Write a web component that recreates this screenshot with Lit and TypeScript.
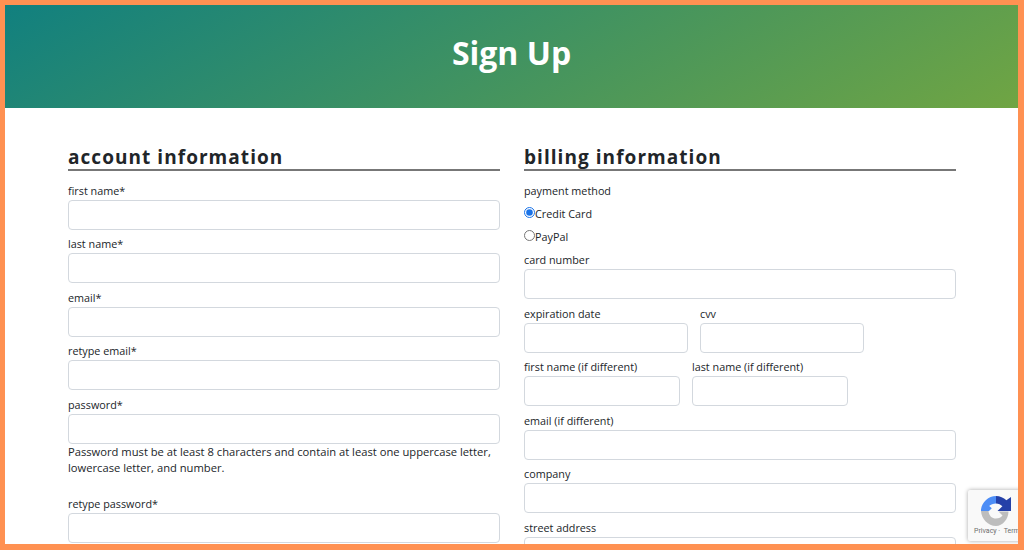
import { LitElement, html, css } from "lit";
import { customElement } from "lit/decorators.js";

const field = (label: string, cls = "") => html`
  <div class="field ${cls}">
    <label>${label}</label>
    <input type="text" />
  </div>
`;

@customElement("app-root")
export class AppRoot extends LitElement {
  static styles = css`
    :host {
      display: block;
      width: 1024px;
      height: 550px;
      box-sizing: border-box;
      border-style: solid;
      border-color: #ff9152;
      border-width: 5px 6px 6px 5px;
      overflow: hidden;
      position: relative;
      background: #fff;
      font-family: "Open Sans", sans-serif;
      color: #212529;
    }
    .hero {
      height: 103px;
      display: flex;
      align-items: center;
      justify-content: center;
      background: linear-gradient(150deg, #11807f 0%, #70a543 100%);
    }
    h1 {
      margin: 0;
      color: #fff;
      font-size: 32px;
      font-weight: 700;
      line-height: 1.2;
      padding-bottom: 6px;
    }
    .cols {
      display: grid;
      grid-template-columns: 432px 432px;
      gap: 24px;
      padding: 37px 0 0 63px;
    }
    h2 {
      margin: 0 0 10.9px;
      font-size: 19px;
      font-weight: 700;
      letter-spacing: 1.05px;
      line-height: 24px;
      border-bottom: 2px solid #777;
    }
    .field {
      display: flex;
      flex-direction: column;
      margin-bottom: 5.5px;
    }
    .field.pw {
      margin-bottom: 0;
    }
    label,
    .label {
      display: block;
      font-size: 10.8px;
      line-height: 18px;
    }
    input[type="text"] {
      display: block;
      box-sizing: border-box;
      width: 100%;
      height: 30px;
      border: 1px solid #d3d8de;
      border-radius: 4px;
      background: #fff;
      padding: 0 8px;
      margin: 0;
    }
    .hint {
      margin: 0 0 18px;
      font-size: 11.2px;
      line-height: 16.5px;
    }
    .row {
      display: flex;
      gap: 12px;
    }
    .w164 { width: 164px; }
    .w156 { width: 156px; }
    .radio {
      display: flex;
      align-items: center;
      font-size: 10.8px;
      line-height: 18px;
      height: 18px;
      margin: 5px 0 0;
    }
    .radio input {
      margin: 0 0 2px;
      width: 11px;
      height: 11px;
      accent-color: #1a73e8;
    }
    .group {
      margin-bottom: 5.5px;
    }
    .recaptcha {
      position: absolute;
      left: 963px;
      top: 485px;
      width: 90px;
      height: 51px;
      background: #f9f9f9;
      border-radius: 2px;
      box-shadow: 0 0 4px rgba(0, 0, 0, 0.35);
    }
    .recaptcha svg {
      position: absolute;
      left: 13px;
      top: 6px;
      width: 30px;
      height: 30px;
    }
    .links {
      position: absolute;
      left: 6px;
      top: 37px;
      font-family: "Roboto", sans-serif;
      font-size: 7px;
      line-height: 9px;
      color: #6f6f6f;
      white-space: nowrap;
    }
  `;

  render() {
    return html`
      <header class="hero"><h1>Sign Up</h1></header>
      <main class="cols">
        <section>
          <h2>account information</h2>
          ${field("first name*")}
          ${field("last name*")}
          ${field("email*")}
          ${field("retype email*")}
          <div class="field pw">
            <label>password*</label>
            <input type="text" />
          </div>
          <p class="hint">
            Password must be at least 8 characters and contain at least one uppercase letter, lowercase letter, and number.
          </p>
          ${field("retype password*")}
        </section>
        <section>
          <h2>billing information</h2>
          <div class="group">
            <span class="label">payment method</span>
            <div class="radio"><input type="radio" name="pay" checked />Credit Card</div>
            <div class="radio"><input type="radio" name="pay" />PayPal</div>
          </div>
          ${field("card number")}
          <div class="row">
            ${field("expiration date", "w164")}
            ${field("cvv", "w164")}
          </div>
          <div class="row">
            ${field("first name (if different)", "w156")}
            ${field("last name (if different)", "w156")}
          </div>
          ${field("email (if different)")}
          ${field("company")}
          ${field("street address")}
        </section>
      </main>
      <aside class="recaptcha">
        <svg viewBox="0 0 30 30" aria-hidden="true">
          <path fill="#4c8df6" d="M15 0 C7.5 0 1 6 0 13.5 V15 H8 L10.8 12.2 L8.2 10 C9.8 8.4 12.2 7.4 15 7.4 Z" />
          <path fill="#2440a8" d="M15 0 C19 0 22.6 1.6 25.4 4.3 L30 1 V15 H16.5 L21.4 10.2 C19.8 8.5 17.6 7.4 15 7.4 Z" />
          <path fill="#bdbdbd" d="M0 15 H7.5 C8 20 11 22.6 15 22.6 C18 22.6 20 21.4 21.5 19.6 L17.5 15.5 H27.5 C27.5 23 21.5 30 15 30 C7 30 0.5 23 0 15 Z" />
        </svg>
        <div class="links">Privacy&nbsp;·&nbsp;&nbsp;Terms</div>
      </aside>
    `;
  }
}
